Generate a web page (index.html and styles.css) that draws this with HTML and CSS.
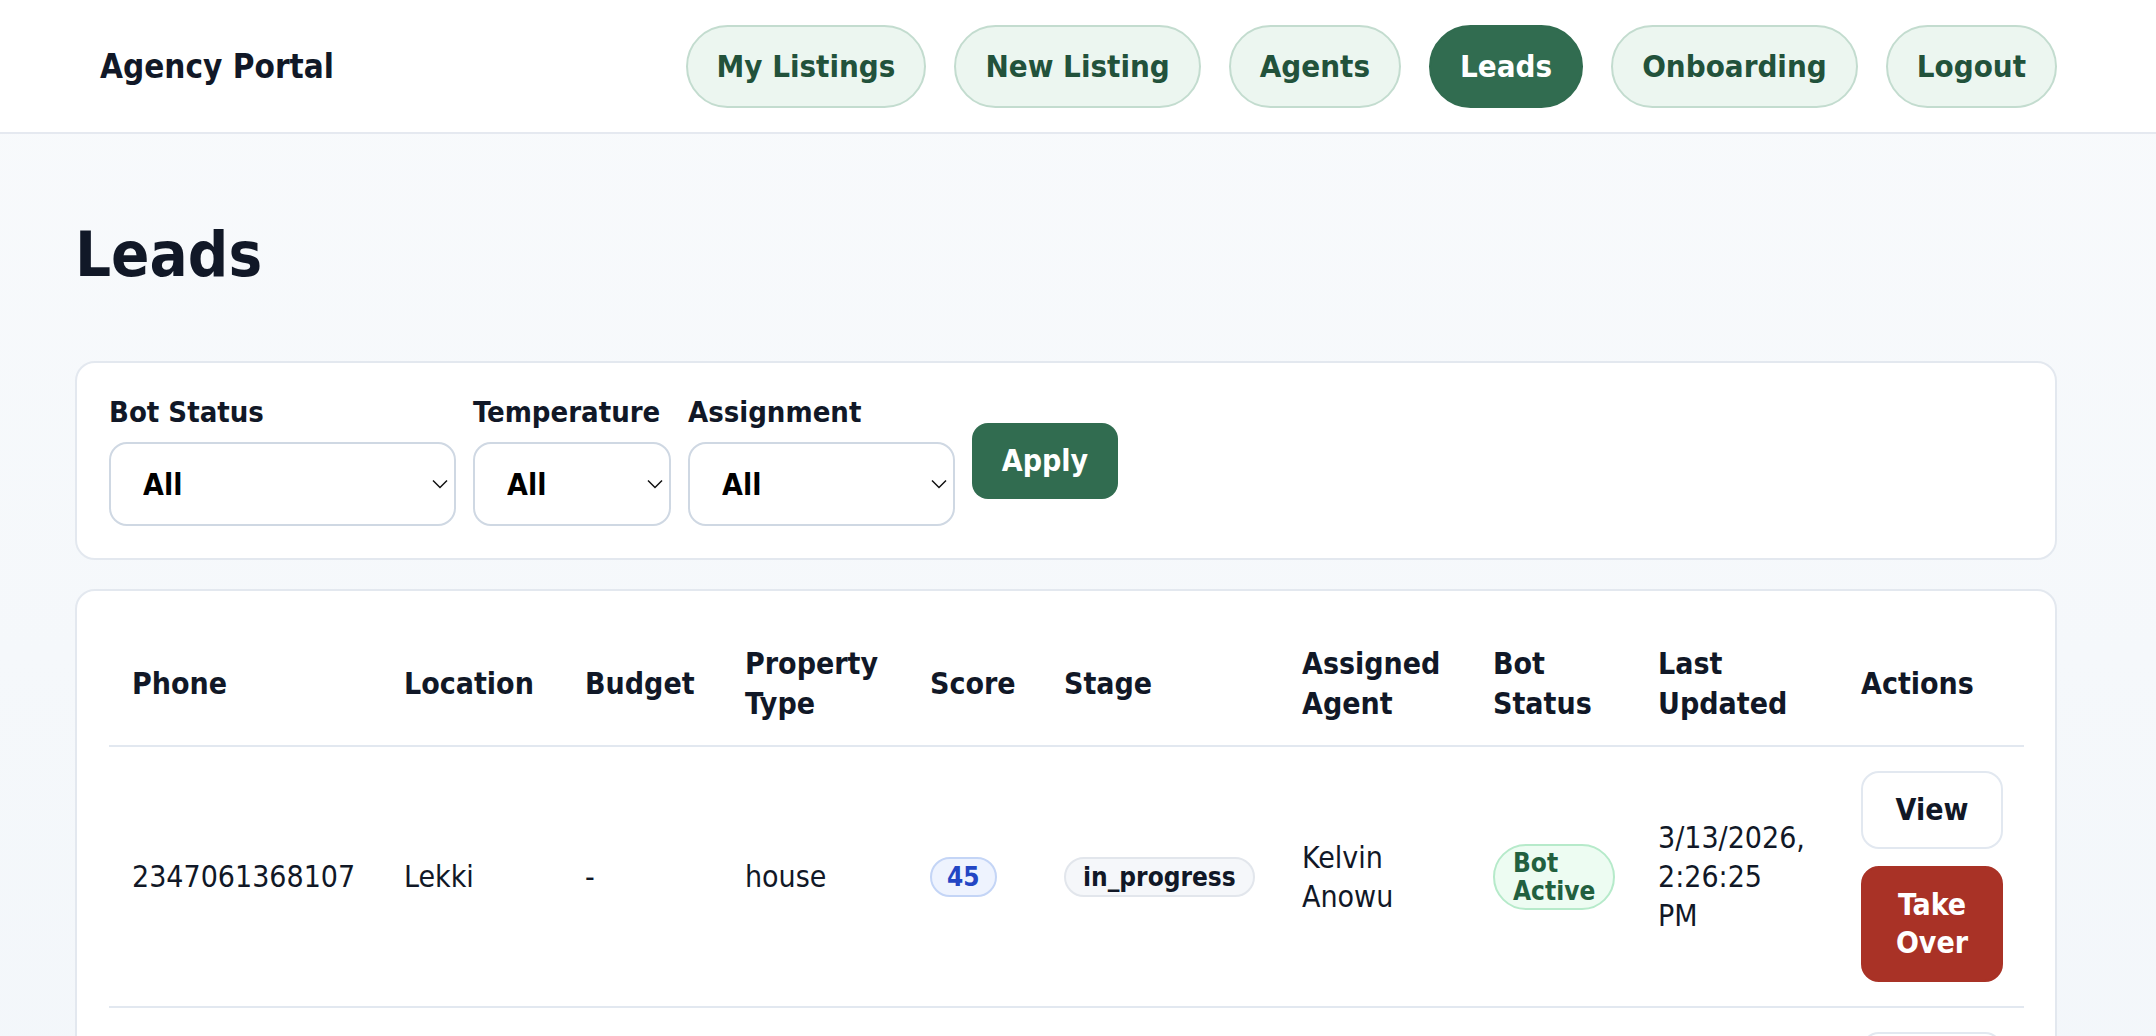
FILE: index.html
```html
<!DOCTYPE html>
<html lang="en">
<head>
  <meta charset="UTF-8">
  <meta name="viewport" content="width=device-width, initial-scale=1.0">
  <title>Agency Portal - Leads</title>
  <link rel="stylesheet" href="styles.css">
</head>
<body>
  <header class="topbar">
    <div class="brand">Agency Portal</div>
    <nav class="nav">
      <a class="nav-link" href="#">My Listings</a>
      <a class="nav-link" href="#">New Listing</a>
      <a class="nav-link" href="#">Agents</a>
      <a class="nav-link active" href="#">Leads</a>
      <a class="nav-link" href="#">Onboarding</a>
      <a class="nav-link" href="#">Logout</a>
    </nav>
  </header>

  <main class="page">
    <h1 class="page-title">Leads</h1>

    <section class="card filters">
      <div class="field">
        <label for="botStatus">Bot Status</label>
        <select id="botStatus" class="select select-bot">
          <option>All</option>
          <option>Bot Active</option>
          <option>Human Takeover</option>
        </select>
      </div>
      <div class="field">
        <label for="temperature">Temperature</label>
        <select id="temperature" class="select select-temp">
          <option>All</option>
          <option>Hot</option>
          <option>Warm</option>
          <option>Cold</option>
        </select>
      </div>
      <div class="field">
        <label for="assignment">Assignment</label>
        <select id="assignment" class="select select-assign">
          <option>All</option>
          <option>Assigned</option>
          <option>Unassigned</option>
        </select>
      </div>
      <button class="btn-apply" id="applyBtn">Apply</button>
    </section>

    <section class="card table-card">
      <table class="leads">
        <colgroup>
          <col class="c-phone">
          <col class="c-location">
          <col class="c-budget">
          <col class="c-type">
          <col class="c-score">
          <col class="c-stage">
          <col class="c-agent">
          <col class="c-bot">
          <col class="c-updated">
          <col class="c-actions">
        </colgroup>
        <thead>
          <tr>
            <th>Phone</th>
            <th>Location</th>
            <th>Budget</th>
            <th>Property Type</th>
            <th>Score</th>
            <th>Stage</th>
            <th>Assigned Agent</th>
            <th>Bot Status</th>
            <th>Last Updated</th>
            <th>Actions</th>
          </tr>
        </thead>
        <tbody>
          <tr>
            <td>2347061368107</td>
            <td>Lekki</td>
            <td>-</td>
            <td>house</td>
            <td><span class="badge badge-score">45</span></td>
            <td><span class="badge badge-stage">in_progress</span></td>
            <td>Kelvin Anowu</td>
            <td><span class="badge badge-bot">Bot Active</span></td>
            <td class="cell-date">3/13/2026, 2:26:25 PM</td>
            <td>
              <div class="actions">
                <button class="btn-view">View</button>
                <button class="btn-takeover">Take Over</button>
              </div>
            </td>
          </tr>
          <tr>
            <td>2348031245690</td>
            <td>Ikoyi</td>
            <td>-</td>
            <td>flat</td>
            <td><span class="badge badge-score">30</span></td>
            <td><span class="badge badge-stage">new</span></td>
            <td>Kelvin Anowu</td>
            <td><span class="badge badge-bot">Bot Active</span></td>
            <td class="cell-date">3/12/2026, 4:10:02 PM</td>
            <td>
              <div class="actions">
                <button class="btn-view">View</button>
                <button class="btn-takeover">Take Over</button>
              </div>
            </td>
          </tr>
        </tbody>
      </table>
    </section>
  </main>
</body>
</html>
```

FILE: styles.css
```css
body {
  margin: 0;
  font-family: "DejaVu Sans Condensed", "DejaVu Sans", sans-serif;
  font-stretch: condensed;
  font-size: 30px;
  color: #111827;
  background: linear-gradient(180deg, #f8fafc 0%, #f2f6fa 100%);
  min-height: 100vh;
}

/* top bar */
.topbar {
  display: flex;
  align-items: center;
  justify-content: space-between;
  height: 132px;
  padding: 0 99px 0 100px;
  background: #fff;
  border-bottom: 2px solid #e5e9f0;
}
.brand {
  font-size: 33px;
  font-weight: bold;
  color: #111827;
}
.nav {
  display: flex;
  gap: 28px;
}
.nav-link {
  display: block;
  padding: 22px 29px;
  line-height: 35px;
  font-size: 31px;
  font-weight: bold;
  color: #22523b;
  text-decoration: none;
  background: #ecf6f0;
  border: 2px solid #c3dccf;
  border-radius: 999px;
}
.nav-link.active {
  background: #316c50;
  border-color: #316c50;
  color: #fff;
}

/* page */
.page {
  padding: 84px 99px 0 75px;
}
.page-title {
  margin: 0 0 69px;
  font-size: 63px;
  line-height: 74px;
  font-weight: bold;
  color: #111827;
}
.card {
  background: #fff;
  border: 2px solid #e3e8ef;
  border-radius: 20px;
  padding: 32px;
}

/* filters */
.filters {
  display: flex;
  align-items: center;
  gap: 17px;
  margin-bottom: 29px;
}
.field {
  display: flex;
  flex-direction: column;
  gap: 12px;
}
.field label {
  font-size: 29px;
  line-height: 35px;
  font-weight: bold;
  color: #111827;
}
.select {
  appearance: none;
  -webkit-appearance: none;
  height: 84px;
  padding: 0 30px 0 32px;
  font-family: inherit;
  font-size: 30px;
  font-weight: bold;
  color: #000;
  background: #fff url("data:image/svg+xml,%3Csvg xmlns='http://www.w3.org/2000/svg' width='16' height='10' viewBox='0 0 16 10'%3E%3Cpath d='M1 1.5l7 7 7-7' fill='none' stroke='%23111' stroke-width='1.5'/%3E%3C/svg%3E") no-repeat right 6px center;
  border: 2px solid #cfd8e3;
  border-radius: 18px;
}
.select-bot { width: 347px; }
.select-temp { width: 198px; }
.select-assign { width: 267px; }

.btn-apply {
  height: 76px;
  width: 146px;
  font-family: inherit;
  font-size: 30px;
  font-weight: bold;
  color: #fff;
  background: #316c50;
  border: none;
  border-radius: 16px;
  cursor: pointer;
}

/* leads table */
.table-card {
  padding-bottom: 40px;
}
.leads {
  width: 100%;
  table-layout: fixed;
  border-collapse: collapse;
}
.c-phone { width: 272px; }
.c-location { width: 181px; }
.c-budget { width: 160px; }
.c-type { width: 185px; }
.c-score { width: 134px; }
.c-stage { width: 238px; }
.c-agent { width: 191px; }
.c-bot { width: 165px; }
.c-updated { width: 203px; }
.c-actions { width: 186px; }

.leads th {
  text-align: left;
  vertical-align: middle;
  padding: 21px 21px 21px 23px;
  line-height: 40px;
  font-size: 30px;
  font-weight: bold;
  color: #111827;
  border-bottom: 2px solid #e2e8f0;
}
.leads td {
  vertical-align: middle;
  padding: 24px 21px 24px 23px;
  line-height: 39px;
  border-bottom: 2px solid #e2e8f0;
}
.leads td.cell-date {
  padding-right: 45px;
}

.badge {
  display: inline-block;
  vertical-align: middle;
  padding: 3px 17px;
  font-size: 26px;
  line-height: 30px;
  font-weight: bold;
  border: 2px solid;
  border-radius: 999px;
}
.badge-score {
  padding: 3px 15px;
  color: #2346c4;
  background: #eef3fe;
  border-color: #c4d5f6;
}
.badge-stage {
  color: #111827;
  background: #f5f7fa;
  border-color: #e2e6ec;
}
.badge-bot {
  padding: 3px 18px;
  line-height: 28px;
  color: #22603f;
  background: #edfcf2;
  border-color: #b6eaca;
  border-radius: 34px;
}

.actions {
  display: flex;
  flex-direction: column;
  gap: 17px;
}
.actions button {
  padding: 18px 0;
  font-family: inherit;
  font-size: 30px;
  line-height: 38px;
  font-weight: bold;
  text-align: center;
  border-radius: 18px;
  cursor: pointer;
}
.btn-view {
  color: #111827;
  background: #fff;
  border: 2px solid #e2e8f0;
}
.btn-takeover {
  padding-left: 28px;
  padding-right: 28px;
  color: #fff;
  background: #a93226;
  border: 2px solid #a93226;
}
```
